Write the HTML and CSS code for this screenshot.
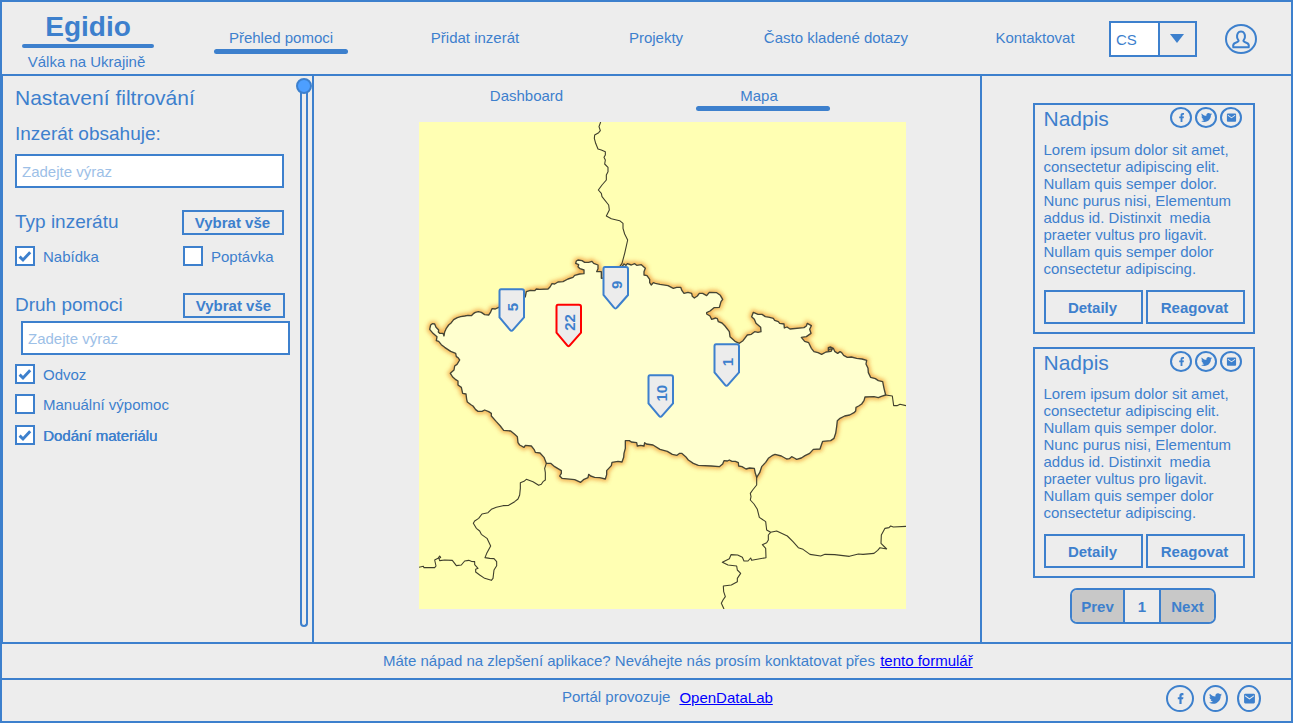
FILE: index.html
```html
<!DOCTYPE html>
<html lang="cs">
<head>
<meta charset="utf-8">
<title>Egidio</title>
<link rel="stylesheet" href="styles.css">
</head>
<body>
<svg class="defs" width="0" height="0">
  <symbol id="fb" viewBox="0 0 24 24"><path d="M14 13.5h2.7l.8-3.8H14v-2c0-1.03.3-1.9 2-1.9h1.5V2.14c-.326-.043-1.557-.14-2.857-.14C11.928 2 10 3.657 10 6.7v3H7v3.8h3V22h4z"/></symbol>
  <symbol id="tw" viewBox="0 0 24 24"><path d="M23.953 4.57a10 10 0 01-2.825.775 4.958 4.958 0 002.163-2.723c-.951.555-2.005.959-3.127 1.184a4.92 4.92 0 00-8.384 4.482C7.69 8.095 4.067 6.13 1.64 3.162a4.822 4.822 0 00-.666 2.475c0 1.71.87 3.213 2.188 4.096a4.904 4.904 0 01-2.228-.616v.06a4.923 4.923 0 003.946 4.827 4.996 4.996 0 01-2.212.085 4.936 4.936 0 004.604 3.417 9.867 9.867 0 01-6.102 2.105c-.39 0-.779-.023-1.17-.067a13.995 13.995 0 007.557 2.209c9.053 0 13.998-7.496 13.998-13.985 0-.21 0-.42-.015-.63A9.935 9.935 0 0024 4.59z"/></symbol>
  <symbol id="mail" viewBox="0 0 24 24"><path d="M20 3H4a2 2 0 0 0-2 2v14a2 2 0 0 0 2 2h16a2 2 0 0 0 2-2V5a2 2 0 0 0-2-2zm0 5.2-8 5.6-8-5.6V6l8 5.6L20 6z"/></symbol>
  <symbol id="check" viewBox="0 0 16 16"><path d="M2.6 8.6 6 12 13.2 4.2" fill="none" stroke="currentColor" stroke-width="2.9"/></symbol>
</svg>
<div class="app">
  <header class="header">
    <div class="brand">
      <h1 class="brand-name">Egidio</h1>
      <p class="brand-sub">Válka na Ukrajině</p>
    </div>
    <nav class="nav">
      <a class="nav-item active">Přehled pomoci</a>
      <a class="nav-item">Přidat inzerát</a>
      <a class="nav-item">Projekty</a>
      <a class="nav-item wide">Často kladené dotazy</a>
      <a class="nav-item">Kontaktovat</a>
    </nav>
    <div class="lang"><span class="lang-value">CS</span><span class="lang-arrow"><svg width="14" height="9" viewBox="0 0 14 9"><path d="M0 0h14L7 9z"/></svg></span></div>
    <svg class="user" width="34" height="32" viewBox="0 0 34 32"><ellipse cx="17" cy="16" rx="15" ry="14"/><path d="M9.3 24.200c-.6-2.700.5-3.900 2.400-4.500 2.100-.7 2.900-1 2.900-1.900 0-.6-1.300-1.900-1.500-3.500-.3-3.400.9-5.700 3.900-5.700s4.200 2.300 3.900 5.700c-.2 1.600-1.500 2.900-1.500 3.500 0 .9.8 1.200 2.900 1.900 1.900.6 3 1.800 2.400 4.500z"/></svg>
  </header>

  <main class="main">
    <aside class="filters">
      <div class="filter-body">
        <h2 class="title">Nastavení filtrování</h2>
        <h3 class="label">Inzerát obsahuje:</h3>
        <div class="input">Zadejte výraz</div>
        <div class="group-head first"><h3 class="label">Typ inzerátu</h3><button class="btn small">Vybrat vše</button></div>
        <div class="types">
          <label class="check"><span class="box"><svg><use href="#check"/></svg></span>Nabídka</label>
          <label class="check"><span class="box"></span>Poptávka</label>
        </div>
        <div class="group-head second"><h3 class="label">Druh pomoci</h3><button class="btn small">Vybrat vše</button></div>
        <div class="input indented">Zadejte výraz</div>
        <div class="kinds">
          <label class="check"><span class="box"><svg><use href="#check"/></svg></span>Odvoz</label>
          <label class="check"><span class="box"></span>Manuální výpomoc</label>
          <label class="check strong"><span class="box"><svg><use href="#check"/></svg></span>Dodání materiálu</label>
        </div>
      </div>
      <div class="scroll"><span class="thumb"></span><span class="track"></span></div>
    </aside>

    <section class="content">
      <div class="tabs"><a class="tab">Dashboard</a><a class="tab active">Mapa</a></div>
      <svg class="map" viewBox="3 6 1461 1461">
        <defs>
          <filter id="glow" x="-10%" y="-10%" width="120%" height="120%"><feGaussianBlur stdDeviation="6"/></filter>
          <path id="land" d="M38 615 43 611 50 612 54 622 62 630 61 636 65 640 75 640 78 648 80 636 85 625 92 615 100 608 107 599 118 593 128 590 140 588 150 586 160 587 166 581 172 577 181 575 190 577 200 584 212 585 217 578 222 566 232 567 242 562 285 550 318 535 322 530 325 515 337 511 350 512 355 507 365 508 390 507 396 501 402 491 410 492 420 486 435 485 450 477 465 472 470 466 485 462 498 461 498 450 486 446 480 440 482 434 473 430 475 423 480 420 492 422 500 427 512 427 522 424 527 430 540 435 540 446 536 455 550 455 550 475 580 470 612 440 618 432 624 436 628 431 640 435 650 431 656 436 670 434 682 445 678 455 678 465 687 467 695 478 695 488 700 495 706 488 712 490 726 493 750 497 766 505 776 502 788 502 792 512 798 520 810 517 821 520 823 529 829 534 838 528 844 520 854 520 866 527 874 517 896 518 907 526 914 538 909 545 904 562 888 563 876 573 866 578 866 582 876 588 881 598 893 594 898 596 901 605 912 609 921 618 934 635 936 650 951 664 964 670 975 662 988 645 1000 643 1010 635 1020 637 1029 635 1028 622 1014 610 1009 598 1001 590 1006 577 1020 583 1032 583 1042 590 1055 592 1066 595 1070 601 1081 605 1085 610 1098 612 1099 624 1107 621 1116 627 1158 623 1165 618 1168 610 1180 617 1175 628 1179 640 1165 650 1150 652 1160 664 1172 668 1180 685 1188 695 1200 698 1211 703 1224 696 1239 694 1243 687 1235 687 1231 693 1231 683 1238 681 1246 685 1250 694 1259 700 1266 695 1271 698 1277 706 1288 712 1300 711 1316 715 1332 717 1346 721 1344 732 1350 745 1351 758 1358 772 1372 776 1381 782 1394 785 1398 805 1403 825 1390 829 1381 833 1368 830 1341 831 1338 842 1331 852 1322 858 1314 862 1313 873 1308 878 1295 885 1280 888 1266 895 1258 902 1256 920 1253 940 1248 955 1238 962 1214 964 1210 975 1206 987 1186 988 1175 1000 1161 1007 1150 1014 1136 1018 1129 1014 1121 1010 1114 1016 1106 1017 1090 1008 1071 1003 1062 1007 1051 1015 1043 1027 1031 1040 1025 1058 1016 1072 1012 1060 1009 1045 995 1044 984 1047 972 1040 962 1038 961 1028 952 1024 942 1024 934 1020 928 1023 918 1022 914 1032 904 1040 880 1038 841 1036 826 1030 811 1020 803 1010 791 1000 785 1000 777 1006 763 1003 748 994 726 988 705 975 685 972 680 968 678 978 668 976 658 978 656 968 640 966 634 962 622 962 622 985 618 1000 617 1012 612 1026 600 1024 582 1027 580 1037 566 1052 566 1064 562 1077 545 1073 530 1072 518 1068 512 1063 510 1073 498 1078 488 1087 470 1079 432 1075 425 1068 430 1060 430 1052 410 1040 398 1030 385 1030 378 1012 366 999 352 997 348 988 340 978 322 976 318 982 305 975 300 968 298 950 290 943 278 933 257 931 247 918 235 905 220 888 220 880 212 875 200 870 192 874 180 874 173 869 165 858 160 855 148 846 146 838 144 822 134 820 130 802 120 795 120 783 112 778 104 771 97 760 108 750 110 738 117 733 125 720 120 713 115 710 113 700 98 694 80 682 70 674 62 664 55 662 57 650 45 640 35 628z"/>
        </defs>
        <path class="map-bg" d="M3 6h1461v1461H3z"/>
        <use href="#land" class="land-glow" filter="url(#glow)"/>
        <use href="#land" class="land"/>
        <g class="borders">
          <path d="M548 6 543 20 547 32 542 38 530 45 529 55 533 70 540 87 550 90 562 95 562 105 558 112 562 120 560 132 570 142 570 155 565 165 565 180 552 195 541 210 550 220 552 230 572 255 574 270 565 288 580 296 605 302 615 310 615 325 620 342 629 360 620 400 612 430 605 440"/>
          <path d="M385 1030 380 1045 382 1058 382 1080 375 1085 370 1093 362 1096 345 1085 325 1078 318 1084 307 1088 307 1105 305 1125 300 1137 290 1145 272 1156 255 1157 235 1162 220 1168 210 1178 192 1182 182 1195 170 1203 166 1210 175 1225 185 1233 190 1243 207 1255 218 1278 207 1298 201 1313 215 1315 228 1316 236 1325 236 1337 228 1350 225 1375 220 1381 200 1375 185 1365 173 1356 173 1348 180 1345 170 1334 170 1325 160 1324 152 1321 140 1323 130 1335 115 1337 103 1321 80 1320 65 1322 63 1316 68 1312 65 1308 60 1315 50 1320 54 1338 50 1343 18 1343 16 1339 3 1342"/>
          <path d="M1016 1070V1095L1004 1110 997 1120 999 1130 997 1140 1008 1152 1018 1168 1024 1192 1043 1205 1046 1230 1058 1237 1076 1233 1108 1248 1125 1265 1141 1283 1155 1288 1176 1303 1208 1308 1221 1303 1250 1304 1294 1309 1321 1302 1335 1303 1368 1300 1379 1291 1386 1283 1406 1287 1389 1270 1390 1245 1401 1225 1413 1223 1418 1218 1426 1221 1464 1219"/>
          <path d="M1058 1237 1051 1245 1051 1260 1046 1268 1033 1274 1043 1285 1044 1313 1001 1321 998 1314 990 1323 978 1323 973 1312 959 1305 939 1304 934 1316 913 1327 930 1335 956 1338 958 1350 968 1360 958 1375 958 1385 940 1395 916 1398 917 1415 922 1430 915 1440 910 1450 918 1467"/>
          <path d="M1403 825 1423 828 1427 857 1437 857 1446 853 1464 857"/>
        </g>
        <g class="pin" transform="translate(243 508) scale(3)"><path d="M2 0H23Q25 0 25 2V28L14 40.500Q12.500 42.500 11 40.500L.5 28V2Q.5 0 2 0z"/><text transform="translate(18.600 17.800) rotate(-90)">5</text></g>
        <g class="pin selected" transform="translate(414 554) scale(3)"><path d="M2 0H23Q25 0 25 2V28L14 40.500Q12.500 42.500 11 40.500L.5 28V2Q.5 0 2 0z"/><text transform="translate(18.600 17.800) rotate(-90)">22</text></g>
        <g class="pin" transform="translate(555 441) scale(3)"><path d="M2 0H23Q25 0 25 2V28L14 40.500Q12.500 42.500 11 40.500L.5 28V2Q.5 0 2 0z"/><text transform="translate(18.600 17.800) rotate(-90)">9</text></g>
        <g class="pin" transform="translate(888 673) scale(3)"><path d="M2 0H23Q25 0 25 2V28L14 40.500Q12.500 42.500 11 40.500L.5 28V2Q.5 0 2 0z"/><text transform="translate(18.600 17.800) rotate(-90)">1</text></g>
        <g class="pin" transform="translate(690 766) scale(3)"><path d="M2 0H23Q25 0 25 2V28L14 40.500Q12.500 42.500 11 40.500L.5 28V2Q.5 0 2 0z"/><text transform="translate(18.600 17.800) rotate(-90)">10</text></g>
      </svg>
    </section>

    <aside class="ads">
      <article class="card">
        <div class="card-head"><h2 class="title">Nadpis</h2><div class="share"><span class="round"><svg><use href="#fb"/></svg></span><span class="round"><svg><use href="#tw"/></svg></span><span class="round"><svg><use href="#mail"/></svg></span></div></div>
        <p class="card-text">Lorem ipsum dolor sit amet,
consectetur adipiscing elit.
Nullam quis semper dolor.
Nunc purus nisi, Elementum
addus id. Distinxit  media
praeter vultus pro ligavit.
Nullam quis semper dolor
consectetur adipiscing.</p>
        <div class="card-actions"><button class="btn">Detaily</button><button class="btn">Reagovat</button></div>
      </article>
      <article class="card">
        <div class="card-head"><h2 class="title">Nadpis</h2><div class="share"><span class="round"><svg><use href="#fb"/></svg></span><span class="round"><svg><use href="#tw"/></svg></span><span class="round"><svg><use href="#mail"/></svg></span></div></div>
        <p class="card-text">Lorem ipsum dolor sit amet,
consectetur adipiscing elit.
Nullam quis semper dolor.
Nunc purus nisi, Elementum
addus id. Distinxit  media
praeter vultus pro ligavit.
Nullam quis semper dolor
consectetur adipiscing.</p>
        <div class="card-actions"><button class="btn">Detaily</button><button class="btn">Reagovat</button></div>
      </article>
      <div class="pager"><span class="page-prev">Prev</span><span class="page-now">1</span><span class="page-next">Next</span></div>
    </aside>
  </main>

  <section class="feedback">Máte nápad na zlepšení aplikace? Neváhejte nás prosím konktatovat přes <a class="link" href="#">tento formulář</a></section>

  <footer class="footer">
    <p class="credit">Portál provozuje <a class="link" href="#">OpenDataLab</a></p>
    <div class="social"><span class="round big w28"><svg><use href="#fb"/></svg></span><span class="round big w25"><svg><use href="#tw"/></svg></span><span class="round big w24"><svg><use href="#mail"/></svg></span></div>
  </footer>
</div>
</body>
</html>
```

FILE: styles.css
```css
:root { --blue: #3d80cd; --bg: #ededed; }
* { box-sizing: border-box; }
body { margin: 0; background: var(--bg); color: var(--blue); font: 15px/17px "Liberation Sans", Arial, sans-serif; }
h1, h2, h3, p { margin: 0; font-weight: normal; }
svg { fill: currentColor; display: block; }
.defs { position: absolute; }
.app { width: 1293px; height: 723px; border: 2px solid var(--blue); display: grid; grid-template-rows: 74px 568px 36px 1fr; overflow: hidden; }

.header { display: flex; border-bottom: 2px solid var(--blue); }
.brand { width: 132px; margin-left: 20px; padding-top: 8px; text-align: center; }
.brand-name { font-size: 28px; line-height: 34px; font-weight: bold; }
.brand-name::after { content: ""; display: block; height: 4px; border-radius: 2px; background: var(--blue); }
.brand-sub { padding: 5px 3px 0 0; }
.nav { display: grid; grid-template-columns: 194px 181px 162px 217px 134px; margin-left: 60px; padding-top: 27px; }
.nav-item { width: 134px; text-align: center; white-space: nowrap; }
.nav-item.wide { width: 170px; }
.active::after { content: ""; display: block; height: 5px; margin-top: 3px; border-radius: 3px; background: var(--blue); }
.lang { display: flex; width: 88px; height: 36px; margin: 19px 0 0 7px; border: 2px solid var(--blue); }
.lang-value { width: 47px; padding: 8px 0 0 5px; background: #fff; }
.lang-arrow { flex: 1; padding: 11px 0 0 10px; border-left: 2px solid var(--blue); }
.user { margin: 21px 0 0 27px; fill: none; stroke: var(--blue); stroke-width: 2; }

.main { display: grid; grid-template-columns: 312px 668px 1fr; border-bottom: 2px solid var(--blue); }
.filters { display: flex; border-left: 1px solid var(--blue); border-right: 2px solid var(--blue); }
.filter-body { width: 275px; padding: 10px 0 0 12px; flex: none; }
.title { font-size: 21px; line-height: 24px; }
.label { font-size: 19px; line-height: 22px; }
.filter-body > .label { margin-top: 13px; }
.input { width: 269px; height: 34px; margin-top: 9px; padding: 7px 5px; border: 2px solid var(--blue); background: #fff; color: #9dc0e7; }
.indented { margin: 3px 0 0 6px; }
.group-head { display: flex; justify-content: space-between; width: 269px; }
.group-head .label { padding-top: 1px; }
.first { margin-top: 22px; }
.second { width: 270px; margin-top: 27px; }
.btn { width: 99px; height: 34px; padding: 0; border: 2px solid var(--blue); background: none; color: var(--blue); font: bold 15px/17px "Liberation Sans", Arial, sans-serif; }
.btn.small { width: 102px; height: 25px; padding-right: 1px; }
.types { display: grid; grid-template-columns: 168px 1fr; margin-top: 11px; }
.check { display: flex; align-items: center; gap: 8px; height: 20px; }
.box { width: 20px; height: 20px; border: 2px solid var(--blue); background: #fff; }
.box svg { width: 16px; height: 16px; }
.kinds { display: grid; gap: 10px; margin-top: 9px; }
.strong { margin-top: 1px; text-shadow: .4px 0 0 var(--blue); }
.scroll { display: flex; flex-direction: column; align-items: center; width: 16px; margin: 2px 0 0 17.5px; flex: none; }
.thumb { width: 16px; height: 16px; border: 2px solid var(--blue); border-radius: 50%; background: #4d9fff; }
.track { width: 8px; height: 534px; margin-top: -1px; border: 2px solid var(--blue); border-top: 0; border-radius: 0 0 4px 4px; }

.content { border-right: 2px solid var(--blue); padding-left: 105px; }
.tabs { display: grid; grid-template-columns: 134px 134px; gap: 103px; height: 46px; padding: 11px 0 0 40px; }
.tab { text-align: center; }
.tab:first-child { padding-left: 1px; }
.tab.active { text-indent: -8px; }
.tab.active::after { margin-top: 2px; }
.map { width: 487px; height: 487px; }
.map-bg { fill: #ffffb3; }
.land-glow { fill: none; stroke: #f0a040; stroke-width: 14; opacity: .9; }
.land { fill: #ffffcf; stroke: #454535; stroke-width: 4; stroke-linejoin: round; }
.borders { fill: none; stroke: #3f3f2c; stroke-width: 3.3; stroke-linejoin: round; }
.pin path { fill: #ececec; stroke: #3d80cd; stroke-width: 2; }
.pin.selected path { stroke: #f00; }
.pin text { font-size: 15px; font-weight: bold; text-anchor: middle; fill: #3d80cd; }

.ads { padding: 27px 0 0 50.5px; }
.card { width: 222px; height: 231px; margin-bottom: 13px; padding: 2px 8px 8px 9px; border: 2px solid var(--blue); }
.card-head { display: flex; justify-content: space-between; }
.share { display: flex; gap: 3px; padding-right: 2.5px; }
.round { display: flex; align-items: center; justify-content: center; width: 22px; height: 21px; border: 2px solid var(--blue); border-radius: 50%; }
.round svg { width: 11px; height: 11px; }
.card-text { margin-top: 10px; white-space: pre; }
.card-actions { display: flex; gap: 3px; margin-top: 13px; }
.card-actions .btn { padding-right: 1px; }
.pager { display: flex; width: 146px; height: 36px; margin: -3px 0 0 37.5px; border: 2px solid var(--blue); border-radius: 7px; overflow: hidden; font-weight: bold; text-align: center; line-height: 34px; }
.page-prev, .page-next { background: #c8c8c8; }
.page-prev { width: 51px; }
.page-next { flex: 1; }
.page-now { width: 38px; border: solid var(--blue); border-width: 0 2px; }

.feedback { padding: 8px 0 0 381px; border-bottom: 2px solid var(--blue); white-space: nowrap; }
.link { color: #00f; text-decoration: underline; }
.feedback .link { margin-left: 1px; }
.footer { display: flex; justify-content: space-between; }
.credit { display: flex; align-items: flex-end; height: 26px; padding: 0 0 1px 560px; }
.credit .link { margin: 0 0 -1px 9px; }
.social { display: flex; gap: 9px; padding: 5px 30px 0 0; }
.big { height: 27px; }
.big svg { width: 13px; height: 13px; }
.w28 { width: 28px; }
.w25 { width: 25px; }
.w24 { width: 24px; }
```
